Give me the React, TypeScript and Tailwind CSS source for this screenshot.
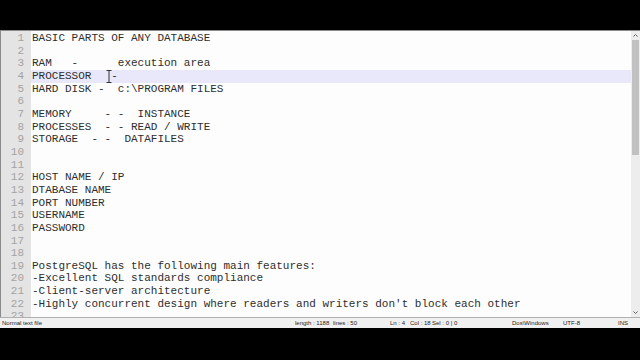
const lines: string[] = [
  "BASIC PARTS OF ANY DATABASE",
  "",
  "RAM   -      execution area",
  "PROCESSOR   -",
  "HARD DISK -  c:\\PROGRAM FILES",
  "",
  "MEMORY     - -  INSTANCE",
  "PROCESSES  - - READ / WRITE",
  "STORAGE  - -  DATAFILES",
  "",
  "",
  "HOST NAME / IP",
  "DTABASE NAME",
  "PORT NUMBER",
  "USERNAME",
  "PASSWORD",
  "",
  "",
  "PostgreSQL has the following main features:",
  "-Excellent SQL standards compliance",
  "-Client-server architecture",
  "-Highly concurrent design where readers and writers don't block each other",
  "",
];

const mono = "font-['Liberation_Mono','Courier_New',monospace]";

function IBeam() {
  return (
    <svg
      className="absolute left-[75px] top-[0px]"
      width="6"
      height="13"
      viewBox="0 0 6 13"
      fill="none"
      stroke="#333"
      strokeWidth="1"
    >
      <path d="M0.5 0.5h5M3 0.5v12M0.5 12.5h5" />
    </svg>
  );
}

function StatusBar() {
  return (
    <div className="flex h-[11px] items-center border-t border-[#b0b0b0] bg-[#f0f0f0] text-[6px] leading-none text-[#222] font-['Liberation_Sans',Arial,sans-serif]">
      <div className="w-[293px] pl-[2px]">Normal text file</div>
      <div className="flex w-[95px] pl-[2px]">
        <span className="w-[38px]">length : 1188</span>
        <span>lines : 50</span>
      </div>
      <div className="flex w-[122px] pl-[2px]">
        <span className="w-[20px]">Ln : 4</span>
        <span className="w-[22px]">Col : 18</span>
        <span>Sel : 0 | 0</span>
      </div>
      <div className="w-[51px] pl-[2px]">Dos\Windows</div>
      <div className="w-[57px] pl-[2px]">UTF-8</div>
      <div className="pl-[0px]">INS</div>
    </div>
  );
}

function Scrollbar() {
  return (
    <div className="flex w-[9px] flex-col items-center bg-[#ededed]">
      <div className="flex h-[9px] w-full items-center justify-center text-[6px] leading-none text-[#606060]">
        <svg width="5" height="3" viewBox="0 0 5 3" fill="none" stroke="#606060" strokeWidth="1">
          <path d="M0.5 2.5L2.5 0.5L4.5 2.5" />
        </svg>
      </div>
      <div className="h-[115px] w-[7px] bg-[#c1c1c1]" />
      <div className="flex-1" />
      <div className="flex h-[9px] w-full items-center justify-center">
        <svg width="5" height="3" viewBox="0 0 5 3" fill="none" stroke="#606060" strokeWidth="1">
          <path d="M0.5 0.5L2.5 2.5L4.5 0.5" />
        </svg>
      </div>
    </div>
  );
}

export default function App() {
  return (
    <div className="flex h-[360px] w-[640px] flex-col overflow-hidden bg-black">
      <div className="h-[30px] shrink-0" />
      <div className="flex h-[287px] shrink-0 border-t border-l border-[#8a8a8a] bg-white">
        <div className="flex flex-1 overflow-hidden">
          <div className={`w-[30px] shrink-0 bg-[#e4e4e4] pt-[1px] text-[11px] text-[#a3a3a3] ${mono}`}>
            {lines.map((_, i) => (
              <div key={i} className="h-[12.67px] pr-[7px] text-right leading-[12.67px]">
                {i + 1}
              </div>
            ))}
          </div>
          <div className="flex-1 overflow-hidden bg-[#fdfdfd] pt-[1px]">
            {lines.map((text, i) => (
              <div
                key={i}
                className={`relative h-[12.67px] whitespace-pre pl-[1px] text-[11px] leading-[12.67px] text-[#2e2e2e] ${mono} ${
                  i === 3 ? "bg-[#e8e8fa]" : ""
                }`}
              >
                {text}
                {i === 3 && <IBeam />}
              </div>
            ))}
          </div>
        </div>
        <Scrollbar />
      </div>
      <StatusBar />
      <div className="flex-1" />
    </div>
  );
}
